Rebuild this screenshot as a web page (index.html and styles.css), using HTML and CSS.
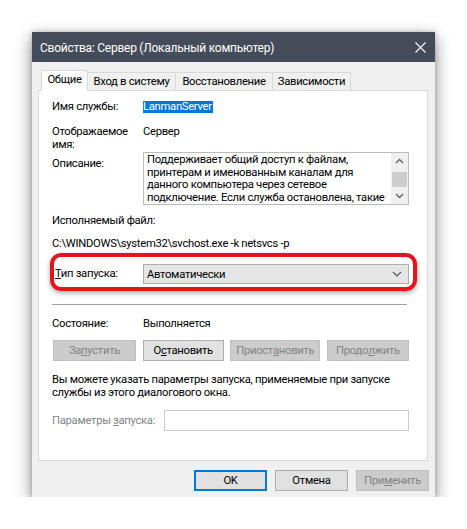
FILE: index.html
```html
<!DOCTYPE html>
<html lang="ru">
<head>
<meta charset="utf-8">
<title>Свойства: Сервер</title>
<link rel="stylesheet" href="styles.css">
</head>
<body>
<div class="window">
  <div class="titlebar">
    <span class="title">Свойства: Сервер (Локальный компьютер)</span>
    <svg class="close" width="11" height="11" viewBox="0 0 11 11"><path d="M0.5 0.5 L10.5 10.5 M10.5 0.5 L0.5 10.5" stroke="#ffffff" stroke-width="1.1" fill="none"/></svg>
  </div>
  <div class="body">
    <div class="tabs">
      <div class="tab active t1">Общие</div>
      <div class="tab t2">Вход в систему</div>
      <div class="tab t3">Восстановление</div>
      <div class="tab t4">Зависимости</div>
    </div>
    <div class="panel">
      <div class="row r-name">
        <span class="label">Имя службы:</span>
        <span class="value"><span class="sel">LanmanServer</span></span>
      </div>
      <div class="row r-disp">
        <span class="label">Отображаемое<br>имя:</span>
        <span class="value">Сервер</span>
      </div>
      <div class="row r-desc">
        <span class="label desc-label">Описание:</span>
        <div class="descbox">
          <div class="desctext">Поддерживает общий доступ к файлам,<br>принтерам и именованным каналам для<br>данного компьютера через сетевое<br>подключение. Если служба остановлена, такие</div>
          <div class="scrollbar">
            <div class="sb-btn"><svg width="9" height="6" viewBox="0 0 9 6"><path d="M1 5 L4.5 1.5 L8 5" stroke="#606060" stroke-width="1.3" fill="none"/></svg></div>
            <div class="sb-thumb"></div>
            <div class="sb-track"></div>
            <div class="sb-btn"><svg width="9" height="6" viewBox="0 0 9 6"><path d="M1 1 L4.5 4.5 L8 1" stroke="#606060" stroke-width="1.3" fill="none"/></svg></div>
          </div>
        </div>
      </div>
      <div class="line r-exe">Исполняемый файл:</div>
      <div class="line r-path">C:\WINDOWS\system32\svchost.exe -k netsvcs -p</div>
      <div class="highlight">
        <span class="label"><u>Т</u>ип запуска:</span>
        <div class="combo">
          <span>Автоматически</span>
          <svg width="10" height="6" viewBox="0 0 10 6"><path d="M1 1 L5 5 L9 1" stroke="#505050" stroke-width="1.1" fill="none"/></svg>
        </div>
      </div>
      <div class="separator"></div>
      <div class="row r-state">
        <span class="label">Состояние:</span>
        <span class="value">Выполняется</span>
      </div>
      <div class="svc-buttons">
        <div class="btn disabled b1">За<u>п</u>устить</div>
        <div class="btn b2">О<u>с</u>тановить</div>
        <div class="btn disabled b3">Приост<u>а</u>новить</div>
        <div class="btn disabled b4">Продо<u>л</u>жить</div>
      </div>
      <p class="hint">Вы можете указать параметры запуска, применяемые при запуске<br>службы из этого диалогового окна.</p>
      <div class="params">
        <span class="plabel">Параметры <u>з</u>апуска:</span>
        <div class="pinput"></div>
      </div>
    </div>
    <div class="footer">
      <div class="btn fbtn ok">OK</div>
      <div class="btn fbtn">Отмена</div>
      <div class="btn fbtn disabled">При<u>м</u>енить</div>
    </div>
  </div>
</div>
</body>
</html>
```
FILE: styles.css
```css
* { box-sizing: border-box; }
html, body { margin: 0; padding: 0; background: #ffffff; }
body {
  font-family: Roboto, "Liberation Sans", sans-serif;
  font-size: 11.25px;
  letter-spacing: -0.3px;
  line-height: 13px;
  color: #000;
  padding: 32px 0 0 32px;
}
u { text-decoration: underline; text-underline-offset: 1px; }

.window {
  width: 403px;
  background: #f0f0f0;
  box-shadow: 0 6px 16px rgba(0,0,0,0.45), 0 0 5px rgba(0,0,0,0.2);
}
.titlebar {
  height: 30px;
  background: #454c59;
  display: flex;
  align-items: center;
  justify-content: space-between;
  padding: 2px 9px 0 8px;
}
.title {
  color: #ffffff;
  font-size: 12px;
  letter-spacing: -0.25px;
  line-height: 18px;
}
.close { display: block; margin-bottom: 1px; }

.body { padding: 8px 7px 0 6px; }

.tabs {
  display: flex;
  align-items: flex-end;
  height: 20px;
  margin-left: 3px;
  position: relative;
  z-index: 1;
}
.tab {
  height: 18px;
  border: 1px solid #d9d9d9;
  border-bottom: none;
  border-left: none;
  background: #f0f0f0;
  text-align: center;
  line-height: 17px;
  white-space: nowrap;
}
.tab.active {
  height: 21px;
  margin-bottom: -1px;
  background: #ffffff;
  border-left: 1px solid #d9d9d9;
  line-height: 18px;
}
.t1 { width: 47px; }
.t2 { width: 88px; }
.t3 { width: 97px; }
.t4 { width: 78px; }

.panel {
  height: 371px;
  background: #ffffff;
  border: 1px solid #d9d9d9;
  padding: 9px 18px 0 13px;
  display: flex;
  flex-direction: column;
}
.row {
  display: grid;
  grid-template-columns: 91px 1fr;
}
.label, .value { white-space: nowrap; }
.sel {
  background: #0078d7;
  color: #ffffff;
  padding: 0 1px 0 0;
  display: inline-block;
  line-height: 12px;
  margin-top: 1px;
}
.r-disp { margin-top: 12px; }
.r-desc { margin-top: 1px; }
.desc-label { margin-top: 5px; }
.descbox {
  height: 53px;
  border: 1px solid #bcbcbc;
  display: flex;
  overflow: hidden;
}
.desctext {
  flex: 1;
  padding: 1px 0 0 3px;
  line-height: 12.5px;
  white-space: nowrap;
  overflow: hidden;
}
.scrollbar {
  width: 17px;
  background: #f0f0f0;
  display: flex;
  flex-direction: column;
}
.sb-btn {
  height: 17px;
  display: flex;
  align-items: center;
  justify-content: center;
}
.sb-thumb {
  height: 16px;
  margin: 2px 1px 0;
  background: #cdcdcd;
}
.sb-track { flex: 1; }

.line { white-space: nowrap; }
.r-exe { margin-top: 9px; }
.r-path { margin-top: 10px; }

.highlight {
  margin: 3px -8px 0 -2px;
  border: 4px solid #e3141b;
  border-radius: 11px;
  padding: 7px 4px 3px 0;
  display: grid;
  grid-template-columns: 89px 1fr;
  align-items: center;
  box-shadow: 0 2px 5px rgba(0,0,0,0.35);
}
.highlight .label { margin-top: -1px; padding-left: 1px; }
.combo {
  height: 20px;
  background: #e5e5e5;
  border: 1px solid #adadad;
  display: flex;
  align-items: center;
  justify-content: space-between;
  padding: 0 6px 0 3px;
}

.separator {
  margin-top: 13px;
  height: 2px;
  border-top: 1px solid #a0a0a0;
  border-bottom: 1px solid #ffffff;
  margin-right: 2px;
}
.r-state { margin-top: 11px; }

.svc-buttons {
  margin-top: 10px;
  display: flex;
  justify-content: space-between;
  padding-left: 1px;
}
.btn {
  height: 21px;
  background: #e1e1e1;
  border: 1px solid #adadad;
  display: flex;
  align-items: center;
  justify-content: center;
  white-space: nowrap;
}
.btn.disabled {
  background: #cccccc;
  border-color: #bfbfbf;
  color: #838383;
}
.b1 { width: 83px; }
.b2 { width: 81px; }
.b3 { width: 90px; }
.b4 { width: 82px; }

.hint {
  margin: 12px 0 0 0;
  white-space: nowrap;
  line-height: 13px;
}
.params {
  margin-top: 11px;
  display: flex;
  align-items: center;
}
.plabel {
  color: #838383;
  width: 112px;
  white-space: nowrap;
}
.pinput {
  flex: 1;
  height: 21px;
  background: #ffffff;
  border: 1px solid #cccccc;
}

.footer {
  height: 36px;
  display: flex;
  justify-content: flex-end;
  align-items: flex-start;
  gap: 8px;
  padding-top: 9px;
  margin-right: -1px;
}
.fbtn { width: 73px; }
.fbtn.ok {
  border: 2px solid #0078d7;
}
```
